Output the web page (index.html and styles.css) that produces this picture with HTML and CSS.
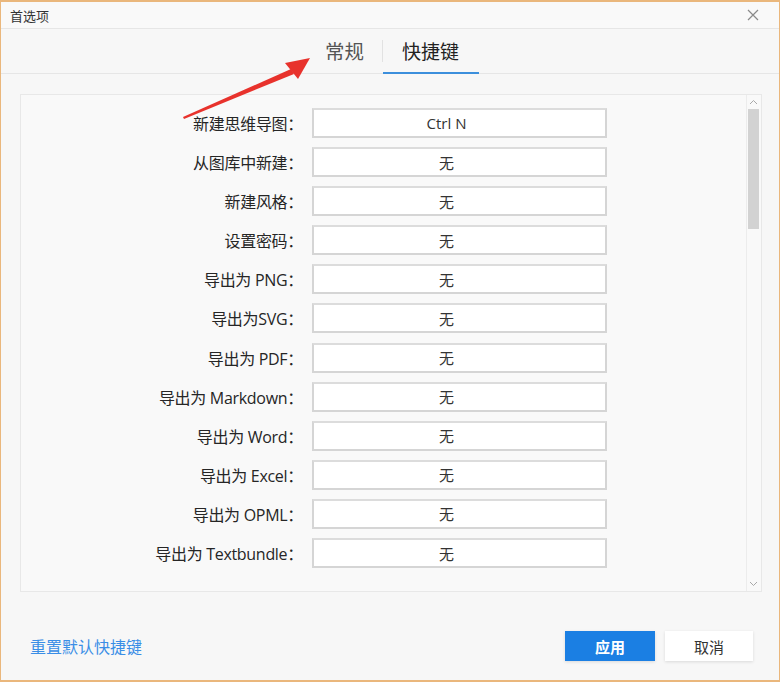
FILE: index.html
```html
<!DOCTYPE html>
<html lang="zh-CN">
<head>
<meta charset="utf-8">
<title>首选项</title>
<link rel="stylesheet" href="styles.css">
</head>
<body>
<div class="window">
  <div class="titlebar">
    <span class="title">首选项</span>
    <svg class="close" width="12" height="12" viewBox="0 0 12 12"><path d="M1 1L11 11M11 1L1 11" stroke="#8a8a8a" stroke-width="1.2" fill="none"/></svg>
  </div>
  <div class="tabs">
    <div class="tab">常规</div>
    <div class="tab-sep"></div>
    <div class="tab active">快捷键</div>
  </div>
  <div class="panel">
    <div class="list">
      <div class="row"><div class="label">新建思维导图：</div><div class="key">Ctrl N</div></div>
      <div class="row"><div class="label">从图库中新建：</div><div class="key">无</div></div>
      <div class="row"><div class="label">新建风格：</div><div class="key">无</div></div>
      <div class="row"><div class="label">设置密码：</div><div class="key">无</div></div>
      <div class="row"><div class="label">导出为 PNG：</div><div class="key">无</div></div>
      <div class="row"><div class="label">导出为SVG：</div><div class="key">无</div></div>
      <div class="row"><div class="label">导出为 PDF：</div><div class="key">无</div></div>
      <div class="row"><div class="label">导出为 Markdown：</div><div class="key">无</div></div>
      <div class="row"><div class="label">导出为 Word：</div><div class="key">无</div></div>
      <div class="row"><div class="label">导出为 Excel：</div><div class="key">无</div></div>
      <div class="row"><div class="label">导出为 OPML：</div><div class="key">无</div></div>
      <div class="row"><div class="label">导出为 Textbundle：</div><div class="key">无</div></div>
    </div>
    <div class="scrollbar">
      <svg class="sb-arrow" width="9" height="6" viewBox="0 0 9 6"><path d="M1 5L4.5 1.5L8 5" stroke="#a8a8a8" stroke-width="1" fill="none"/></svg>
      <div class="sb-track"><div class="sb-thumb"></div></div>
      <svg class="sb-arrow" width="9" height="6" viewBox="0 0 9 6"><path d="M1 1L4.5 4.5L8 1" stroke="#a8a8a8" stroke-width="1" fill="none"/></svg>
    </div>
  </div>
  <div class="footer">
    <a class="reset">重置默认快捷键</a>
    <div class="buttons">
      <div class="btn primary">应用</div>
      <div class="btn">取消</div>
    </div>
  </div>
  <svg class="arrow" width="140" height="70" viewBox="0 0 140 70">
    <polygon points="2,61 110,13 113,18 3,63" fill="#e8322c"/>
    <polygon points="129,2 104,7 117,23" fill="#e8322c"/>
  </svg>
</div>
</body>
</html>
```

FILE: styles.css
```css
* { box-sizing: border-box; }
html, body { margin: 0; padding: 0; }
body {
  width: 780px;
  height: 682px;
  background: #f6f6f6;
  font-family: "Open Sans", "Noto Sans CJK SC", sans-serif;
  color: #333;
}
.window {
  position: relative;
  width: 780px;
  height: 682px;
  border: 1px solid #eab77c;
  border-top-width: 2px;
  border-bottom-width: 2px;
  background: #f7f7f7;
  display: flex;
  flex-direction: column;
}
.titlebar {
  height: 27px;
  flex: none;
  display: flex;
  align-items: center;
  justify-content: space-between;
  padding: 0 20px 0 9px;
  border-bottom: 1px solid #e6e6e6;
  background: #f9f9f9;
}
.title {
  font-family: "Noto Sans CJK SC", sans-serif;
  font-size: 13px;
  color: #333;
}
.close { display: block; }
.tabs {
  height: 45px;
  flex: none;
  display: flex;
  justify-content: center;
  align-items: stretch;
  border-bottom: 1px solid #e6e6e6;
  padding-left: 3px;
}
.tab {
  font-family: "Noto Sans CJK SC", sans-serif;
  font-size: 19px;
  color: #555;
  display: flex;
  align-items: center;
  padding: 0 20px 0 19px;
  border-bottom: 2px solid transparent;
  margin-bottom: -1px;
}
.tab:first-child { padding: 0 18px 0 21px; font-size: 19.5px; }
.tab.active {
  color: #222;
  border-bottom: 2px solid #3c8fdc;
}
.tab-sep {
  width: 1px;
  background: #e2e2e2;
  margin: 11px 0 11px 0;
}
.panel {
  flex: none;
  margin: 20px 17px 0 19px;
  height: 498px;
  border: 1px solid #e8e8e8;
  background: #f9f9f9;
  display: flex;
}
.list {
  flex: 1;
  padding-top: 13px;
  display: flex;
  flex-direction: column;
  gap: 9.1px;
}
.row {
  display: flex;
  align-items: center;
  height: 30px;
}
.label {
  width: 282px;
  text-align: right;
  font-size: 16px;
  font-family: "Open Sans", "Noto Sans CJK SC", sans-serif;
  color: #262626;
  letter-spacing: -0.3px;
}
.key {
  margin-left: 9px;
  width: 295px;
  height: 30px;
  background: #fff;
  border: 2px solid #d5d5d5;
  border-top-color: #dcdcdc;
  display: flex;
  align-items: center;
  justify-content: center;
  padding-right: 26px;
  font-size: 15px;
  color: #333;
}
.scrollbar {
  width: 14px;
  flex: none;
  border-left: 1px solid #ececec;
  display: flex;
  flex-direction: column;
  align-items: center;
  padding: 4px 0 4px;
  margin-right: 1px;
}
.sb-arrow { display: block; flex: none; }
.sb-track { flex: 1; width: 100%; padding: 4px 1px 0 1px; }
.sb-thumb { height: 120px; background: #d2d2d2; }
.footer {
  flex: 1;
  display: flex;
  align-items: center;
  justify-content: space-between;
  padding: 19px 26px 0 29px;
}
.reset {
  font-family: "Noto Sans CJK SC", sans-serif;
  font-size: 16px;
  color: #3a8ee6;
  cursor: pointer;
}
.buttons {
  display: flex;
  gap: 10px;
  margin-top: 1px;
}
.btn {
  width: 88px;
  height: 30px;
  display: flex;
  align-items: center;
  justify-content: center;
  font-family: "Noto Sans CJK SC", sans-serif;
  font-size: 15px;
  background: #fff;
  color: #333;
  box-shadow: 0 1px 3px rgba(0,0,0,0.12);
}
.btn.primary {
  width: 90px;
  background: #1b7fe3;
  color: #fff;
  font-weight: bold;
}
.arrow {
  position: absolute;
  left: 180px;
  top: 54px;
}
```
